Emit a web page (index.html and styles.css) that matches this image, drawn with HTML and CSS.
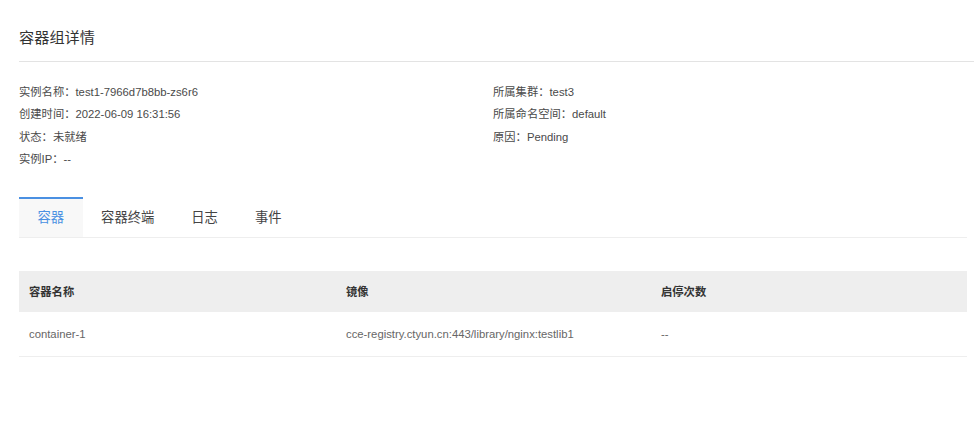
FILE: index.html
```html
<!DOCTYPE html>
<html lang="zh-CN">
<head>
  <meta charset="UTF-8" />
  <title>容器组详情</title>
  <link rel="stylesheet" href="styles.css">
</head>
<body>
  <div class="page">
    <div class="title-bar">
      <h2>容器组详情</h2>
    </div>

    <div class="info">
      <div class="info-col">
        <div class="info-row">实例名称：test1-7966d7b8bb-zs6r6</div>
        <div class="info-row">创建时间：2022-06-09 16:31:56</div>
        <div class="info-row">状态：未就绪</div>
        <div class="info-row">实例IP：--</div>
      </div>
      <div class="info-col">
        <div class="info-row">所属集群：test3</div>
        <div class="info-row">所属命名空间：default</div>
        <div class="info-row">原因：Pending</div>
      </div>
    </div>

    <div class="tabs">
      <div class="tab active">容器</div>
      <div class="tab">容器终端</div>
      <div class="tab">日志</div>
      <div class="tab">事件</div>
    </div>

    <table class="grid">
      <thead>
        <tr>
          <th class="col-name">容器名称</th>
          <th class="col-image">镜像</th>
          <th>启停次数</th>
        </tr>
      </thead>
      <tbody>
        <tr>
          <td>container-1</td>
          <td>cce-registry.ctyun.cn:443/library/nginx:testlib1</td>
          <td>--</td>
        </tr>
      </tbody>
    </table>
  </div>
</body>
</html>
```

FILE: styles.css
```css
body {
  margin: 0;
  padding: 0;
  background: #fff;
  font-family: "Liberation Sans", Arial, "Noto Sans CJK SC", sans-serif;
  color: #555;
}

.page {
  padding: 0 7px 0 19px;
}

.title-bar {
  margin-right: -7px;
  padding: 26px 0 11px;
  border-bottom: 1px solid #e3e3e3;
}

.title-bar h2 {
  margin: 0;
  font-size: 15.2px;
  line-height: 24px;
  font-weight: normal;
  color: #333;
}

.info {
  display: grid;
  grid-template-columns: 474px 1fr;
  margin-top: 19px;
}

.info-row {
  font-size: 11.3px;
  line-height: 22.4px;
  color: #4a4a4a;
}

.tabs {
  display: flex;
  margin-top: 26px;
  border-bottom: 1px solid #eee;
}

.tab {
  height: 38px;
  padding: 0 18.5px;
  line-height: 38px;
  font-size: 13.3px;
  color: #444;
  border-top: 2px solid transparent;
}

.tab.active {
  color: #4a90e2;
  background: #f8f8f8;
  border-top-color: #4a90e2;
}

.grid {
  width: 100%;
  margin-top: 33px;
  border-collapse: collapse;
  font-size: 11.3px;
}

.grid th {
  height: 41px;
  padding: 0 10px;
  text-align: left;
  background: #eee;
  color: #333;
  font-weight: bold;
}

.grid td {
  height: 44px;
  padding: 0 10px;
  color: #666;
  border-bottom: 1px solid #eee;
}

.col-name {
  width: 297px;
}

.col-image {
  width: 295px;
}
```
